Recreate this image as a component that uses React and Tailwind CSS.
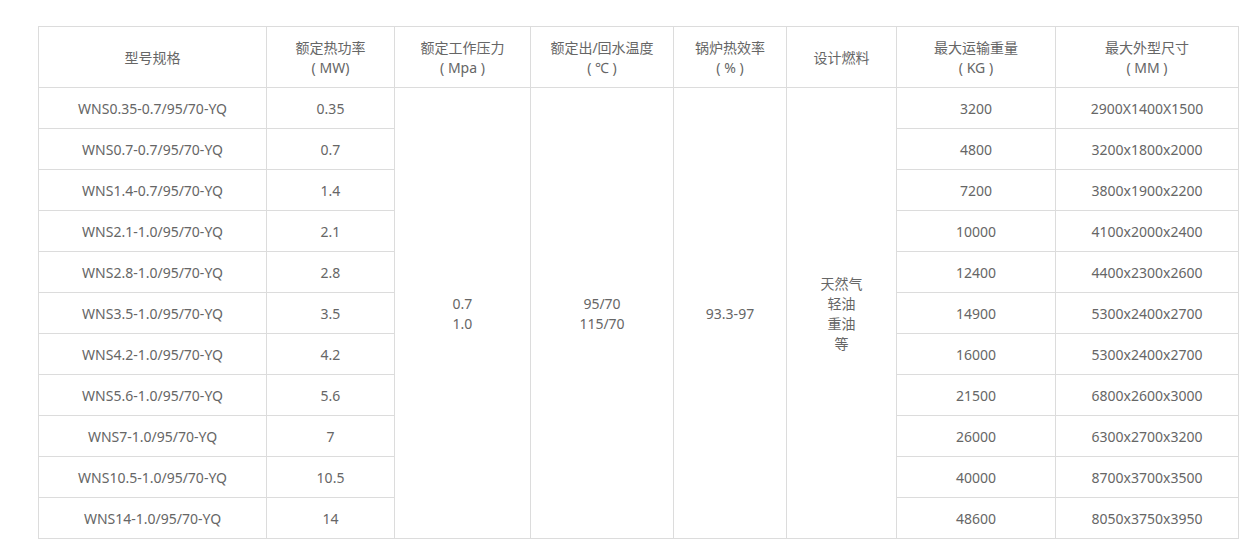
import React from 'react';

const rows = [
  ['WNS0.35-0.7/95/70-YQ', '0.35', '3200', '2900X1400X1500'],
  ['WNS0.7-0.7/95/70-YQ', '0.7', '4800', '3200x1800x2000'],
  ['WNS1.4-0.7/95/70-YQ', '1.4', '7200', '3800x1900x2200'],
  ['WNS2.1-1.0/95/70-YQ', '2.1', '10000', '4100x2000x2400'],
  ['WNS2.8-1.0/95/70-YQ', '2.8', '12400', '4400x2300x2600'],
  ['WNS3.5-1.0/95/70-YQ', '3.5', '14900', '5300x2400x2700'],
  ['WNS4.2-1.0/95/70-YQ', '4.2', '16000', '5300x2400x2700'],
  ['WNS5.6-1.0/95/70-YQ', '5.6', '21500', '6800x2600x3000'],
  ['WNS7-1.0/95/70-YQ', '7', '26000', '6300x2700x3200'],
  ['WNS10.5-1.0/95/70-YQ', '10.5', '40000', '8700x3700x3500'],
  ['WNS14-1.0/95/70-YQ', '14', '48600', '8050x3750x3950'],
];

const cell = 'border border-[#dcdcdc] text-center align-middle px-0 pb-0 pt-[2px]';

const App = () => {
  return (
    <div
      className="bg-white min-h-[543px] pt-[26px] pl-[38px] text-[14px] leading-[20px] text-[#666]"
      style={{ fontFamily: '"Noto Sans", "Noto Sans CJK SC", sans-serif' }}
    >
      <table className="table-fixed border-collapse w-[1200px]">
        <colgroup>
          <col className="w-[228px]" />
          <col className="w-[128px]" />
          <col className="w-[136px]" />
          <col className="w-[143px]" />
          <col className="w-[113px]" />
          <col className="w-[110px]" />
          <col className="w-[159px]" />
          <col className="w-[183px]" />
        </colgroup>
        <thead>
          <tr className="h-[61px]">
            <th className={`${cell} font-normal`}>型号规格</th>
            <th className={`${cell} font-normal`}>额定热功率<br />( MW)</th>
            <th className={`${cell} font-normal`}>额定工作压力<br />( Mpa )</th>
            <th className={`${cell} font-normal`}>额定出/回水温度<br />( ℃ )</th>
            <th className={`${cell} font-normal`}>锅炉热效率<br />( % )</th>
            <th className={`${cell} font-normal`}>设计燃料</th>
            <th className={`${cell} font-normal`}>最大运输重量<br />( KG )</th>
            <th className={`${cell} font-normal`}>最大外型尺寸<br />( MM )</th>
          </tr>
        </thead>
        <tbody>
          {rows.map((r, i) => (
            <tr key={i} className="h-[41px]">
              <td className={cell}>{r[0]}</td>
              <td className={cell}>{r[1]}</td>
              {i === 0 && (
                <>
                  <td className={cell} rowSpan={rows.length}>0.7<br />1.0</td>
                  <td className={cell} rowSpan={rows.length}>95/70<br />115/70</td>
                  <td className={cell} rowSpan={rows.length}>93.3-97</td>
                  <td className={cell} rowSpan={rows.length}>天然气<br />轻油<br />重油<br />等</td>
                </>
              )}
              <td className={cell}>{r[2]}</td>
              <td className={cell}>{r[3]}</td>
            </tr>
          ))}
        </tbody>
      </table>
    </div>
  );
};

export default App;
